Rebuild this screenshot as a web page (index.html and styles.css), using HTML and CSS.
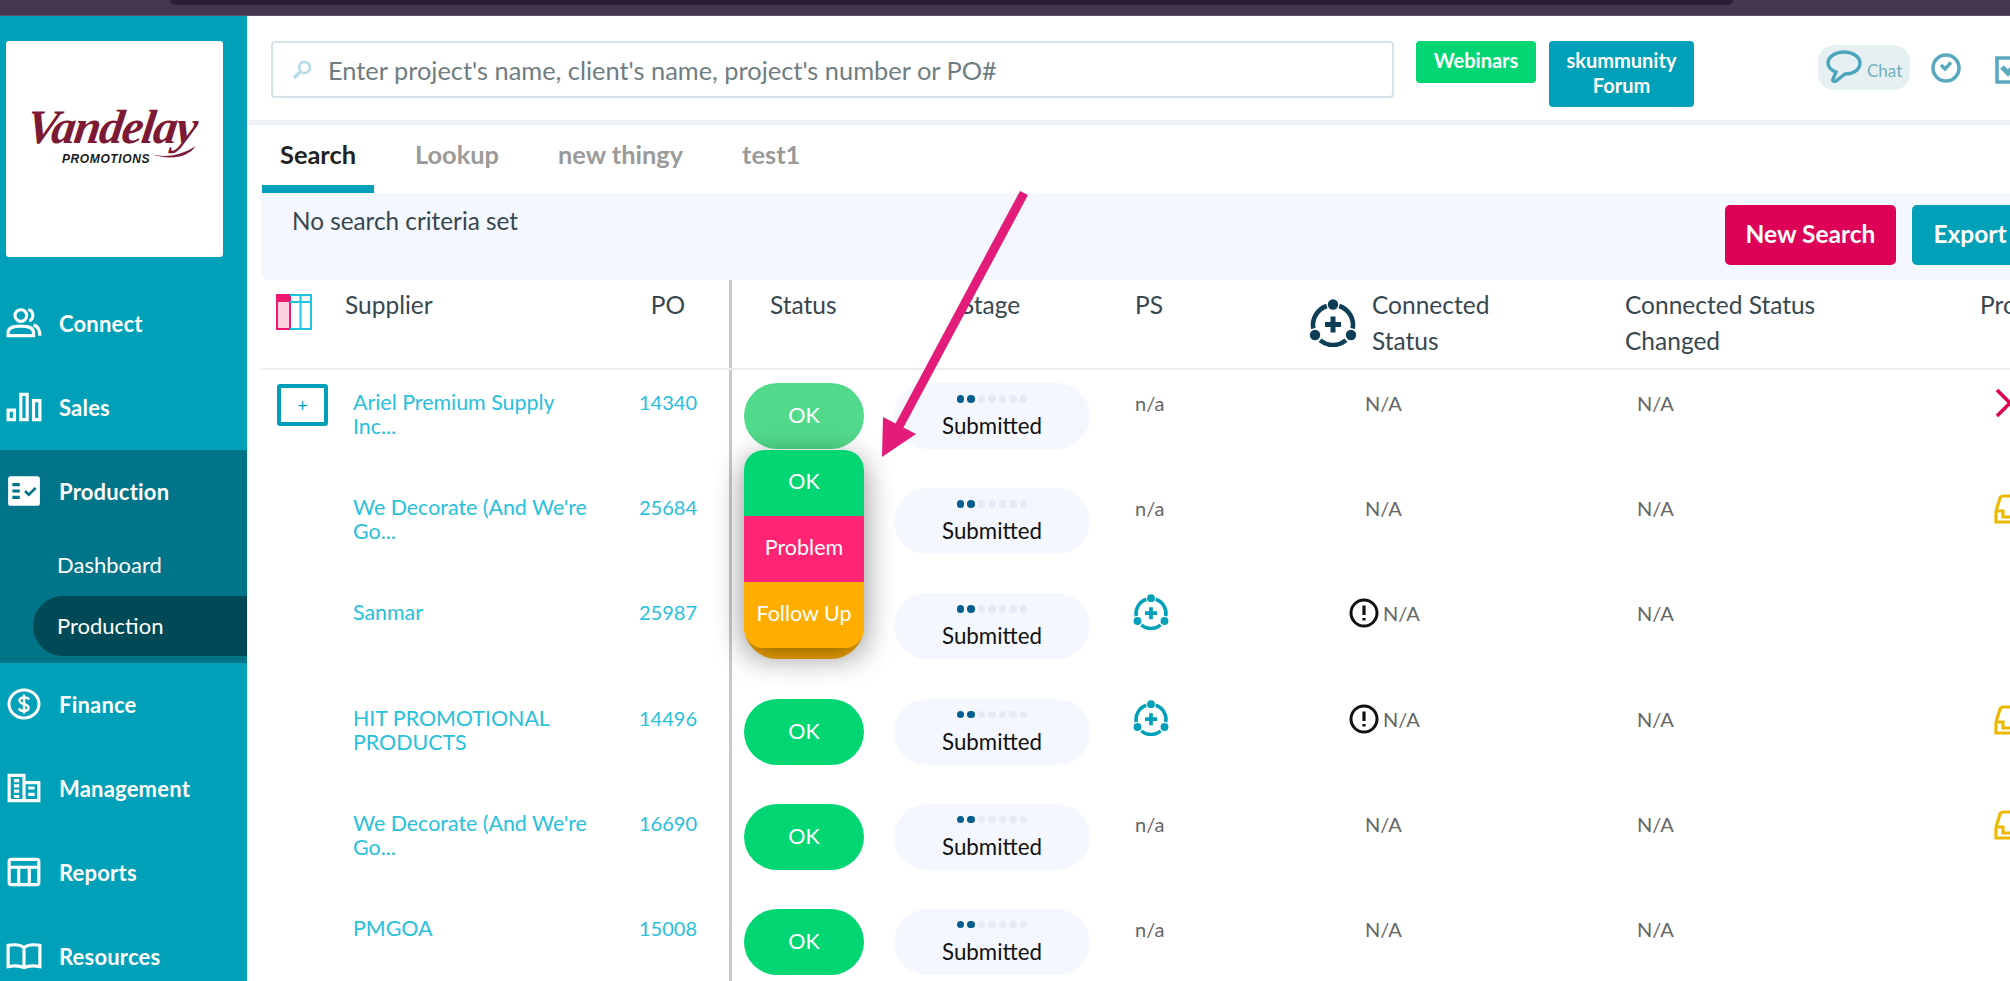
FILE: index.html
```html
<!DOCTYPE html>
<html lang="en">

<head>
    <meta charset="UTF-8">
    <title>Production</title>
    <link rel="stylesheet" href="styles.css">
</head>

<body>
    <svg class="defs" width="0" height="0">
        <symbol id="connected" viewBox="0 0 48 48">
            <g fill="none" stroke="currentColor" stroke-width="4.600">
                <path d="M30.200 7A20 20 0 0 1 43.700 29.500"/>
                <path d="M36.900 41.300A20 20 0 0 1 11.100 41.300"/>
                <path d="M4.300 29.500A20 20 0 0 1 17.800 7"/>
                <path d="M24 17.500V33.500M16 25.500H32" stroke-width="5"/>
            </g>
            <circle cx="24" cy="5.500" r="5.200" fill="currentColor"/>
            <circle cx="6" cy="36" r="5.200" fill="currentColor"/>
            <circle cx="42" cy="36" r="5.200" fill="currentColor"/>
        </symbol>
        <symbol id="tray" viewBox="0 0 40 32">
            <path d="M3 18L7 5Q8 3 11 3H40M3 18V29H40M3 18H10V24H40" fill="none" stroke="currentColor" stroke-width="3.200"/>
        </symbol>
        <symbol id="alert" viewBox="0 0 30 30">
            <circle cx="15" cy="15" r="13" fill="none" stroke="currentColor" stroke-width="3"/>
            <path d="M15 7.500V17M15 20V22.500" fill="none" stroke="currentColor" stroke-width="3.200"/>
        </symbol>
    </svg>

    <div class="topbar"><div class="topbar-pill"></div></div>

    <div class="app">
        <aside class="sidebar">
            <div class="logo-card">
                <div class="logo">
                    <span class="logo-name">Vandelay</span>
                    <span class="logo-sub">PROMOTIONS</span>
                    <svg class="logo-tail" viewBox="0 0 70 24"><path d="M2 16C20 22 44 20 68 5C56 22 30 26 2 16Z" fill="#7c1a36"/></svg>
                </div>
            </div>
            <nav>
                <a class="nav-item">
                    <svg class="nav-icon" viewBox="0 0 34 30" fill="none" stroke="#fff" stroke-width="3"><circle cx="14" cy="8" r="5.500"/><path d="M2 27V24C2 20 6 18 14 18S26 20 26 24V27ZM21 2.500C26 3 27 11 22 13M26 17C31 18 32 22 32 27"/></svg>
                    Connect
                </a>
                <a class="nav-item">
                    <svg class="nav-icon" viewBox="0 0 34 28" fill="none" stroke="#fff" stroke-width="3"><path d="M2 17H8V26H2ZM14 2H20V26H14ZM26 8H32V26H26Z"/></svg>
                    Sales
                </a>
                <div class="nav-group">
                    <a class="nav-item">
                        <svg class="nav-icon" viewBox="0 0 34 28"><rect x="2" width="30" height="28" rx="2.500" fill="#fff"/><path d="M6 8H13M6 14H13M6 20H13" stroke="#007489" stroke-width="3"/><path d="M18 14L21.500 17.500L28 11" fill="none" stroke="#007489" stroke-width="2.500"/></svg>
                        Production
                    </a>
                    <a class="sub-item">Dashboard</a>
                    <a class="sub-item active">Production</a>
                </div>
                <a class="nav-item">
                    <svg class="nav-icon" viewBox="0 0 34 32" fill="none" stroke="#fff" stroke-width="3"><ellipse cx="17" cy="16" rx="15" ry="14"/><path d="M22 11.500C21 9 13 8.500 12.500 12.500C12 17 22 15 21.500 20C21 24 13 23.500 12 20.500M17 6.500V25.500" stroke-width="2.400"/></svg>
                    Finance
                </a>
                <a class="nav-item">
                    <svg class="nav-icon" viewBox="0 0 34 28" fill="none" stroke="#fff" stroke-width="3"><path d="M3 2H17V26H3ZM17 9H31V26H17ZM7.500 7H12.500M7.500 12H12.500M7.500 17H12.500M7.500 22H12.500M21 14H27M21 20H27"/></svg>
                    Management
                </a>
                <a class="nav-item">
                    <svg class="nav-icon" viewBox="0 0 34 28" fill="none" stroke="#fff" stroke-width="3"><rect x="3" y="2" width="28" height="24" rx="2"/><path d="M3 9.500H31M12 9.500V26M22 9.500V26"/></svg>
                    Reports
                </a>
                <a class="nav-item">
                    <svg class="nav-icon" viewBox="0 0 34 26" fill="none" stroke="#fff" stroke-width="3"><path d="M17 5C13 2 7 2 2 3V23C7 22 13 22 17 24C21 22 27 22 32 23V3C27 2 21 2 17 5ZM17 5V24"/></svg>
                    Resources
                </a>
            </nav>
        </aside>

        <main class="content">
            <header class="top-row">
                <div class="search-box">
                    <svg class="search-icon" viewBox="0 0 20 20" fill="none" stroke="#b5dbe4"><circle cx="12.500" cy="7.500" r="5.500" stroke-width="2.600"/><path d="M8 12L2 18" stroke-width="3.500"/></svg>
                    <span>Enter project's name, client's name, project's number or PO#</span>
                </div>
                <a class="top-btn webinars">Webinars</a>
                <a class="top-btn forum">skummunity<br>Forum</a>
                <div class="chat">
                    <svg class="chat-icon" viewBox="0 0 36 34" fill="none" stroke="#4ba5bc" stroke-width="3.400"><path d="M18 2C27 2 34 7 34 13C34 20 27 24 19 24L10 31C8 32 6 31 7 29L10 22C5 20 2 17 2 13C2 7 9 2 18 2Z"/></svg>
                    Chat
                </div>
                <svg class="clock" viewBox="0 0 30 30" fill="none" stroke="#5aa9bf"><circle cx="15" cy="15" r="13" stroke-width="3.600"/><path d="M10 12L14 16L20 9.500" stroke-width="3.600"/></svg>
                <svg class="note" viewBox="0 0 30 28" fill="none" stroke="#5aa9bf" stroke-width="3.600"><path d="M2 2H30V26H2Z"/><path d="M7 11L13 17L22 7" stroke-width="5"/></svg>
            </header>

            <div class="tabs">
                <a class="tab active">Search</a>
                <a class="tab">Lookup</a>
                <a class="tab">new thingy</a>
                <a class="tab">test1</a>
            </div>

            <div class="filter-bar">
                <span class="criteria">No search criteria set</span>
                <a class="action new-search">New Search</a>
                <a class="action export">Export</a>
            </div>

            <div class="row head">
                <div class="cell expand">
                    <svg class="col-icon" viewBox="0 0 36 36">
                        <rect x="1" y="1" width="13" height="34" fill="#fccfe0" stroke="#f0186f" stroke-width="2"/>
                        <rect x="1" y="1" width="13" height="7" fill="#f0186f"/>
                        <path d="M14 1H35V35H14M24.500 1V35M14 8H35" fill="none" stroke="#1cc4e0" stroke-width="2"/>
                    </svg>
                </div>
                <div class="cell">Supplier</div>
                <div class="cell po">PO</div>
                <div class="cell status">Status</div>
                <div class="cell stage-head">Stage</div>
                <div class="cell ps">PS</div>
                <div class="cell connected-head">
                    <svg class="connected-icon"><use href="#connected"/></svg>
                    <span>Connected<br>Status</span>
                </div>
                <div class="cell changed-head">Connected Status<br>Changed</div>
                <div class="cell pro-head">Production</div>
            </div>

            <div class="row">
                <div class="cell expand"><button class="plus">+</button></div>
                <div class="cell supplier">Ariel Premium Supply<br>Inc...</div>
                <div class="cell po num">14340</div>
                <div class="cell status">
                    <div class="pill ok faded">OK</div>
                    <div class="status-menu">
                        <div class="menu-item ok">OK</div>
                        <div class="menu-item problem">Problem</div>
                        <div class="menu-item follow">Follow Up</div>
                    </div>
                </div>
                <div class="cell stage"><div class="stage-pill"><span class="dots"><i class="on"></i><i class="on"></i><i></i><i></i><i></i><i></i><i></i></span>Submitted</div></div>
                <div class="cell ps muted">n/a</div>
                <div class="cell connected muted">N/A</div>
                <div class="cell changed muted">N/A</div>
                <div class="cell pro"><svg class="cross" viewBox="0 0 30 30"><path d="M2 2L28 28M2 28L28 2" stroke="#e0004f" stroke-width="3.500"/></svg></div>
            </div>

            <div class="row">
                <div class="cell expand"></div>
                <div class="cell supplier">We Decorate (And We're<br>Go...</div>
                <div class="cell po num">25684</div>
                <div class="cell status"></div>
                <div class="cell stage"><div class="stage-pill"><span class="dots"><i class="on"></i><i class="on"></i><i></i><i></i><i></i><i></i><i></i></span>Submitted</div></div>
                <div class="cell ps muted">n/a</div>
                <div class="cell connected muted">N/A</div>
                <div class="cell changed muted">N/A</div>
                <div class="cell pro"><svg class="tray"><use href="#tray"/></svg></div>
            </div>

            <div class="row">
                <div class="cell expand"></div>
                <div class="cell supplier">Sanmar</div>
                <div class="cell po num">25987</div>
                <div class="cell status"><div class="pill follow"></div></div>
                <div class="cell stage"><div class="stage-pill"><span class="dots"><i class="on"></i><i class="on"></i><i></i><i></i><i></i><i></i><i></i></span>Submitted</div></div>
                <div class="cell ps"><svg class="ps-icon"><use href="#connected"/></svg></div>
                <div class="cell connected alerted muted"><svg class="alert"><use href="#alert"/></svg>N/A</div>
                <div class="cell changed muted">N/A</div>
                <div class="cell pro"></div>
            </div>

            <div class="row">
                <div class="cell expand"></div>
                <div class="cell supplier">HIT PROMOTIONAL<br>PRODUCTS</div>
                <div class="cell po num">14496</div>
                <div class="cell status"><div class="pill ok">OK</div></div>
                <div class="cell stage"><div class="stage-pill"><span class="dots"><i class="on"></i><i class="on"></i><i></i><i></i><i></i><i></i><i></i></span>Submitted</div></div>
                <div class="cell ps"><svg class="ps-icon"><use href="#connected"/></svg></div>
                <div class="cell connected alerted muted"><svg class="alert"><use href="#alert"/></svg>N/A</div>
                <div class="cell changed muted">N/A</div>
                <div class="cell pro"><svg class="tray"><use href="#tray"/></svg></div>
            </div>

            <div class="row">
                <div class="cell expand"></div>
                <div class="cell supplier">We Decorate (And We're<br>Go...</div>
                <div class="cell po num">16690</div>
                <div class="cell status"><div class="pill ok">OK</div></div>
                <div class="cell stage"><div class="stage-pill"><span class="dots"><i class="on"></i><i class="on"></i><i></i><i></i><i></i><i></i><i></i></span>Submitted</div></div>
                <div class="cell ps muted">n/a</div>
                <div class="cell connected muted">N/A</div>
                <div class="cell changed muted">N/A</div>
                <div class="cell pro"><svg class="tray"><use href="#tray"/></svg></div>
            </div>

            <div class="row">
                <div class="cell expand"></div>
                <div class="cell supplier">PMGOA</div>
                <div class="cell po num">15008</div>
                <div class="cell status"><div class="pill ok">OK</div></div>
                <div class="cell stage"><div class="stage-pill"><span class="dots"><i class="on"></i><i class="on"></i><i></i><i></i><i></i><i></i><i></i></span>Submitted</div></div>
                <div class="cell ps muted">n/a</div>
                <div class="cell connected muted">N/A</div>
                <div class="cell changed muted">N/A</div>
                <div class="cell pro"></div>
            </div>
        </main>
    </div>

    <!-- annotation drawn over the screenshot -->
    <svg class="arrow" viewBox="0 0 2010 981">
        <path d="M1024 193L896 432" stroke="#e31c79" stroke-width="9"/>
        <path d="M882 457L883 417L916 434Z" fill="#e31c79"/>
    </svg>
</body>

</html>
```

FILE: styles.css
```css
html,
body {
    margin: 0;
    padding: 0;
    height: 100%;
    overflow: hidden;
}

body {
    position: relative;
    display: flex;
    flex-direction: column;
    background: #fff;
    font-family: Lato, "Open Sans", sans-serif;
    color: #37474f;
}

.defs {
    position: absolute;
}

.topbar {
    flex: none;
    height: 16px;
    background: #433750;
    border-bottom: 1px solid #5b5360;
    box-sizing: border-box;
}

.topbar-pill {
    width: 1563px;
    height: 5px;
    margin-left: 170px;
    background: #2a1f35;
    border-radius: 0 0 10px 10px;
}

.app {
    flex: 1;
    display: flex;
    min-height: 0;
}

/* sidebar */
.sidebar {
    flex: none;
    width: 247px;
    background: #00a1b8;
    padding-top: 25px;
    box-sizing: border-box;
    overflow: hidden;
}

.logo-card {
    width: 217px;
    height: 216px;
    margin: 0 0 25px 6px;
    background: #fff;
    border-radius: 3px;
    padding: 61px 0 0 21px;
    box-sizing: border-box;
}

.logo {
    position: relative;
    width: 170px;
    height: 64px;
}

.logo-name {
    display: block;
    font-family: "Liberation Serif", serif;
    font-style: italic;
    font-weight: bold;
    font-size: 48px;
    line-height: 50px;
    letter-spacing: -1.500px;
    color: #7c1a36;
    transform: skewX(-8deg);
}

.logo-sub {
    position: absolute;
    left: 35px;
    top: 50px;
    font-family: "Liberation Sans", sans-serif;
    font-style: italic;
    font-weight: bold;
    font-size: 12px;
    line-height: 14px;
    letter-spacing: 0.600px;
    color: #1a1a1a;
}

.logo-tail {
    position: absolute;
    left: 122px;
    top: 37px;
    width: 48px;
    height: 24px;
}

.nav-item {
    height: 84px;
    display: flex;
    align-items: center;
    box-sizing: border-box;
    padding-bottom: 2px;
    color: #fff;
    font-size: 22px;
    font-weight: 700;
    letter-spacing: 0.200px;
}

.nav-icon {
    flex: none;
    width: 36px;
    height: 32px;
    margin: 0 17px 0 6px;
}

.nav-group {
    background: #007489;
    height: 213px;
}

.sub-item {
    display: flex;
    align-items: center;
    height: 60px;
    box-sizing: border-box;
    padding: 0 0 2px 24px;
    margin: 1px 0 0 33px;
    color: #fff;
    font-size: 22px;
    border-radius: 30px 0 0 30px;
}

.sub-item.active {
    background: #004a58;
}

/* main area */
.content {
    flex: 1;
    min-width: 0;
    overflow: hidden;
    position: relative;
}

.top-row {
    display: flex;
    align-items: flex-start;
    width: 1800px;
    height: 104px;
    padding: 25px 0 0 24px;
    box-sizing: border-box;
}

.search-box {
    flex: none;
    display: flex;
    align-items: center;
    width: 1123px;
    height: 57px;
    margin-right: 22px;
    padding-left: 19px;
    box-sizing: border-box;
    border: 2px solid #d5e3e8;
    border-radius: 4px;
    font-size: 25.400px;
    color: #6f7d82;
}

.search-icon {
    width: 20px;
    height: 20px;
    margin-right: 16px;
}

.top-btn {
    flex: none;
    box-sizing: border-box;
    padding: 7px 0;
    color: #fff;
    font-size: 20px;
    line-height: 25px;
    font-weight: 700;
    text-align: center;
    border-radius: 4px;
}

.webinars {
    width: 120px;
    height: 42px;
    margin-right: 13px;
    background: #02d672;
}

.forum {
    width: 145px;
    height: 66px;
    background: #00a1b8;
}

.chat {
    flex: none;
    display: flex;
    align-items: flex-end;
    width: 92px;
    height: 45px;
    margin: 4px 0 0 124px;
    padding: 0 0 10px 8px;
    box-sizing: border-box;
    background: #e6f0f3;
    border-radius: 16px;
    font-size: 17px;
    line-height: 18px;
    color: #6fb0c2;
}

.chat-icon {
    width: 36px;
    height: 34px;
    margin: 0 5px -4px 0;
}

.clock {
    flex: none;
    width: 30px;
    height: 30px;
    margin: 12px 0 0 21px;
}

.note {
    flex: none;
    width: 30px;
    height: 28px;
    margin: 15px 0 0 34px;
}

.tabs {
    display: flex;
    gap: 23px;
    height: 68px;
    padding-left: 15px;
    border-top: 5px solid #eef1f6;
}

.tab {
    height: 68px;
    padding: 0 18px;
    box-sizing: border-box;
    font-size: 25.400px;
    font-weight: 700;
    line-height: 58px;
    color: #9a9a9a;
}

.tab.active {
    color: #222;
    border-bottom: 8px solid #00a1b8;
}

.filter-bar {
    display: flex;
    align-items: flex-start;
    width: 1790px;
    height: 87px;
    margin-left: 14px;
    padding: 12px 23px 0 31px;
    box-sizing: border-box;
    background: #f4f7fe;
    border-radius: 0 0 0 8px;
}

.criteria {
    flex: 1;
    font-size: 24.300px;
    line-height: 32px;
    color: #37474f;
}

.action {
    flex: none;
    height: 60px;
    box-sizing: border-box;
    color: #fff;
    font-size: 24.500px;
    font-weight: 700;
    line-height: 58px;
    text-align: center;
    border-radius: 5px;
}

.new-search {
    width: 171px;
    margin-right: 16px;
    background: #dc0056;
}

.export {
    width: 116px;
    background: #00a1b8;
}

/* table */
.row {
    display: grid;
    grid-template-columns: 84px 262px 122px 165px 196px 200px 322px 358px 140px;
    width: 1849px;
    height: 105.200px;
    margin-left: 14px;
    font-size: 20px;
    line-height: 24px;
}

.row.head {
    height: 90px;
    border-bottom: 2px solid #ececec;
    box-sizing: border-box;
    font-size: 24.500px;
    line-height: 36px;
}

.cell {
    padding-top: 20px;
    box-sizing: border-box;
}

.head .cell {
    padding-top: 7px;
}

.expand {
    padding-top: 0;
}

.head .expand {
    padding: 14px 0 0 15px;
}

.col-icon {
    width: 36px;
    height: 36px;
}

.plus {
    display: block;
    width: 51px;
    height: 42px;
    margin: 14px 0 0 16px;
    padding: 0;
    background: #fff;
    border: 4px solid #00a1b8;
    border-radius: 3px;
    color: #00a1b8;
    font-family: Lato, sans-serif;
    font-size: 18px;
}

.supplier {
    padding-left: 8px;
    color: #29c0dc;
    font-size: 21.400px;
}

.po {
    text-align: center;
}

.num {
    color: #29c0dc;
}

.status {
    position: relative;
    border-left: 3px solid #c8c8c8;
    padding: 13px 0 0 12px;
}

.head .status {
    padding: 7px 0 0 38px;
}

.pill {
    width: 120px;
    height: 66px;
    border-radius: 33px;
    color: #fff;
    font-size: 21.500px;
    line-height: 64px;
    text-align: center;
}

.ok {
    background: #02d672;
}

.faded {
    background: #52da8c;
}

.follow {
    background: #ffae00;
}

.status-menu {
    position: absolute;
    left: 12px;
    top: 80px;
    z-index: 2;
    width: 120px;
    border-radius: 20px;
    overflow: hidden;
    box-shadow: 0 8px 30px rgba(0, 0, 0, 0.45);
}

.menu-item {
    height: 66px;
    color: #fff;
    font-size: 21.500px;
    line-height: 62px;
    text-align: center;
}

.problem {
    background: #ff2474;
}

.stage {
    padding-top: 13px;
}

.stage-head {
    padding-left: 67px;
}

.stage-pill {
    display: flex;
    flex-direction: column;
    align-items: center;
    width: 196px;
    height: 66px;
    box-sizing: border-box;
    padding-top: 12px;
    background: #f4f7fe;
    border-radius: 33px;
    color: #111;
    font-size: 22.300px;
    line-height: 26px;
}

.dots {
    display: flex;
    gap: 3px;
    height: 8px;
    margin-bottom: 10px;
}

.dots i {
    width: 7.500px;
    height: 7.500px;
    border-radius: 50%;
    background: #e4eaf6;
}

.dots i.on {
    background: #005f8f;
}

.ps {
    padding-left: 45px;
}

.muted {
    padding-top: 21px;
    color: #666;
}

.ps-icon {
    display: block;
    width: 36px;
    height: 36px;
    margin: -6px 0 0 -2px;
    color: #00a1b8;
}

.connected-head {
    display: flex;
    gap: 15px;
    padding-left: 19px;
}

.connected-icon {
    width: 48px;
    height: 48px;
    margin-top: 12px;
    color: #0e3d56;
}

.connected {
    padding-left: 75px;
}

.alerted {
    display: flex;
    align-items: flex-start;
    padding: 21px 0 0 59px;
}

.alert {
    width: 30px;
    height: 30px;
    margin: -3px 4px 0 0;
    color: #111;
}

.changed-head {
    padding-left: 13px;
}

.changed {
    padding-left: 25px;
}

.pro-head {
    padding-left: 10px;
}

.pro {
    padding: 18px 0 0 23px;
}

.cross {
    width: 30px;
    height: 30px;
    margin-left: 2px;
}

.tray {
    width: 40px;
    height: 32px;
    color: #ecb800;
}

.arrow {
    position: absolute;
    left: 0;
    top: 0;
    width: 2010px;
    height: 981px;
    z-index: 5;
    pointer-events: none;
}
```
